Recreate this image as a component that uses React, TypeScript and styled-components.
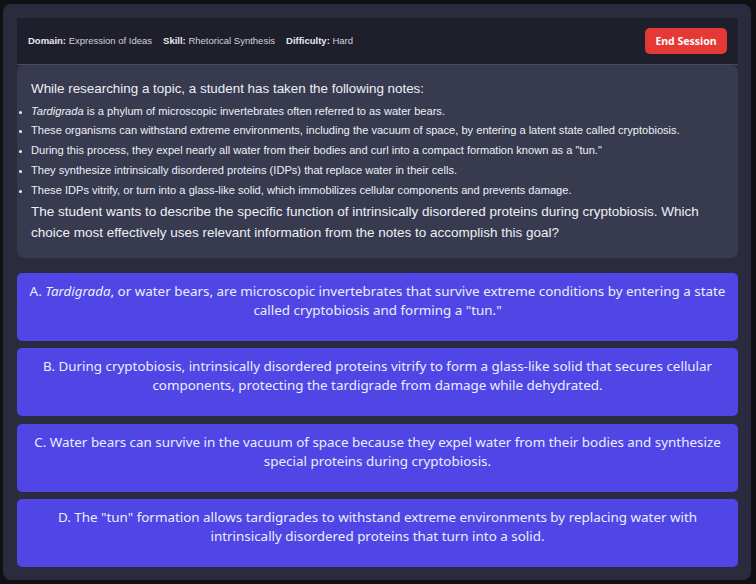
import React from "react";
import styled, { createGlobalStyle } from "styled-components";

const Global = createGlobalStyle`
  html, body { margin: 0; padding: 0; background: #111113; }
  body { font-family: "Liberation Sans", Arial, sans-serif; }
  * { box-sizing: border-box; }
`;

const Page = styled.div`
  padding: 4px 5px 4px 3px;
  height: 584px;
`;

const Panel = styled.div`
  background: #2a2b3e;
  border-radius: 8px;
  padding: 14px 13px 13px 14px;
  height: 576px;
  display: flex;
  flex-direction: column;
`;

const Header = styled.div`
  height: 49px;
  background: #1e1f2b;
  border-bottom: 1px solid #4a4b55;
  display: flex;
  align-items: center;
  justify-content: space-between;
  padding: 0 11px;
`;

const Meta = styled.div`
  display: flex;
  gap: 11px;
  font-size: 9.5px;
  color: #d0d2da;
`;

const MetaLabel = styled.b`
  font-weight: 700;
  color: #e6e8ee;
`;

const EndButton = styled.button`
  width: 82px;
  height: 26px;
  border: none;
  border-radius: 5px;
  background: #e53935;
  color: #fff;
  font-family: "Noto Sans", "Open Sans", sans-serif;
  font-weight: 700;
  font-size: 10.5px;
  padding: 0;
  margin-top: 1px;
`;

const Passage = styled.div`
  background: #383a50;
  border-radius: 7px;
  padding: 15px 14px 15px 14px;
  color: #eef0f5;
`;

const Intro = styled.p`
  margin: 0 0 4px;
  font-size: 13.4px;
  line-height: 18px;
`;

const Notes = styled.ul`
  margin: 0;
  padding: 0;
  list-style: disc outside;
`;

const Note = styled.li`
  font-size: 11.1px;
  line-height: 19.8px;
  &::marker { font-size: 9px; }
`;

const Question = styled.p`
  margin: 0;
  font-size: 13.5px;
  line-height: 21px;
`;

const Choices = styled.div`
  display: flex;
  flex-direction: column;
  gap: 7.5px;
  margin-top: 15px;
`;

const Choice = styled.div`
  height: 68px;
  border-radius: 5px;
  background: #4f46e5;
  color: #eceeff;
  font-family: "Noto Sans", "Open Sans", sans-serif;
  font-size: 13.4px;
  line-height: 19px;
  text-align: center;
  padding: 9px 10px 0;
  cursor: pointer;
`;

const choices: React.ReactNode[] = [
  <>A. <i>Tardigrada</i>, or water bears, are microscopic invertebrates that survive extreme conditions by entering a state called cryptobiosis and forming a "tun."</>,
  <>B. During cryptobiosis, intrinsically disordered proteins vitrify to form a glass-like solid that secures cellular components, protecting the tardigrade from damage while dehydrated.</>,
  <>C. Water bears can survive in the vacuum of space because they expel water from their bodies and synthesize special proteins during cryptobiosis.</>,
  <>D. The "tun" formation allows tardigrades to withstand extreme environments by replacing water with intrinsically disordered proteins that turn into a solid.</>,
];

export default function App() {
  return (
    <>
      <Global />
      <Page>
        <Panel>
          <Header>
            <Meta>
              <span><MetaLabel>Domain:</MetaLabel> Expression of Ideas</span>
              <span><MetaLabel>Skill:</MetaLabel> Rhetorical Synthesis</span>
              <span><MetaLabel>Difficulty:</MetaLabel> Hard</span>
            </Meta>
            <EndButton>End Session</EndButton>
          </Header>
          <Passage>
            <Intro>While researching a topic, a student has taken the following notes:</Intro>
            <Notes>
              <Note><i>Tardigrada</i> is a phylum of microscopic invertebrates often referred to as water bears.</Note>
              <Note>These organisms can withstand extreme environments, including the vacuum of space, by entering a latent state called cryptobiosis.</Note>
              <Note>During this process, they expel nearly all water from their bodies and curl into a compact formation known as a "tun."</Note>
              <Note>They synthesize intrinsically disordered proteins (IDPs) that replace water in their cells.</Note>
              <Note>These IDPs vitrify, or turn into a glass-like solid, which immobilizes cellular components and prevents damage.</Note>
            </Notes>
            <Question>The student wants to describe the specific function of intrinsically disordered proteins during cryptobiosis. Which choice most effectively uses relevant information from the notes to accomplish this goal?</Question>
          </Passage>
          <Choices>
            {choices.map((c, i) => (
              <Choice key={i} role="button">{c}</Choice>
            ))}
          </Choices>
        </Panel>
      </Page>
    </>
  );
}
